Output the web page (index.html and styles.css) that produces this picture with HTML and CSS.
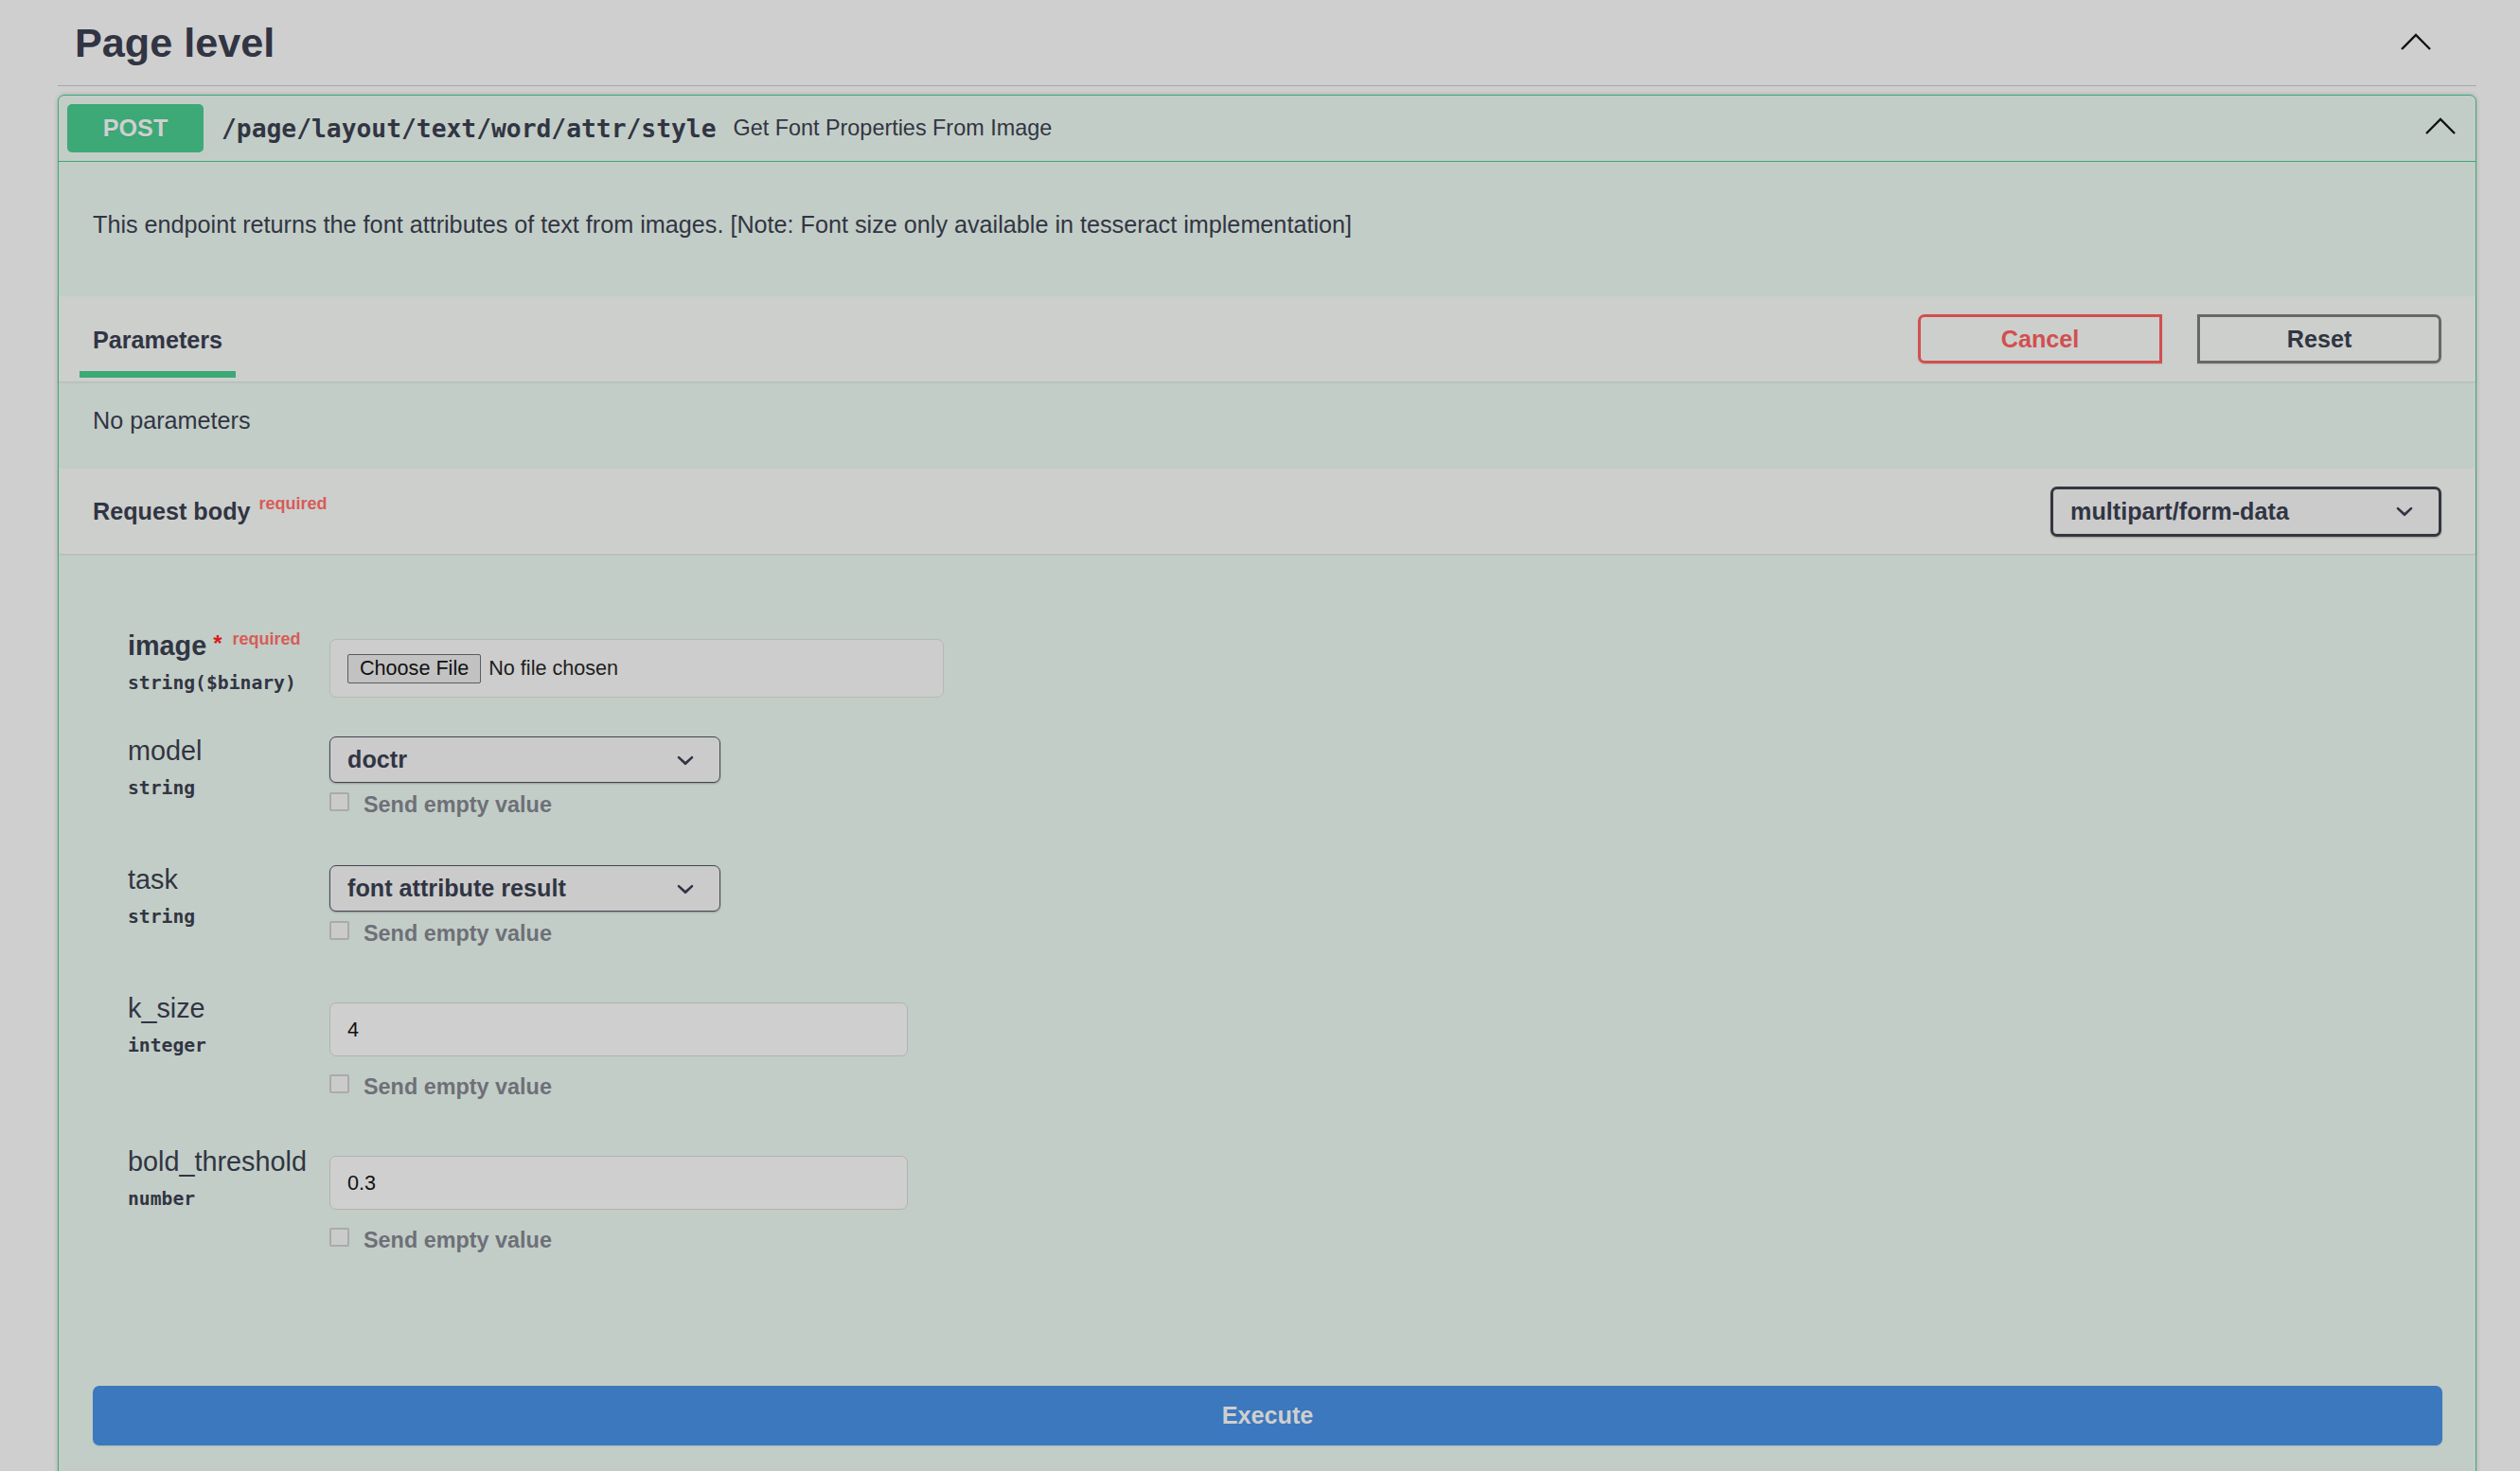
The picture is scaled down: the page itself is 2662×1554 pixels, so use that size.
FILE: index.html
```html
<!DOCTYPE html>
<html lang="en">
<head>
<meta charset="utf-8">
<title>Page level</title>
<link rel="stylesheet" href="styles.css">
</head>
<body>
<div class="page">
  <div class="tag-header">
    <h3 class="tag-title">Page level</h3>
    <svg class="arrow-up tag-arrow" width="32" height="18" viewBox="0 0 32 18"><polyline points="1,17 16,2 31,17"/></svg>
  </div>

  <div class="opblock">
    <div class="summary">
      <span class="method">POST</span>
      <span class="path">/page/layout/text/word/attr/style</span>
      <span class="summary-desc">Get Font Properties From Image</span>
      <svg class="arrow-up summary-arrow" width="32" height="18" viewBox="0 0 32 18"><polyline points="1,17 16,2 31,17"/></svg>
    </div>

    <div class="op-desc">
      <p>This endpoint returns the font attributes of text from images. [Note: Font size only available in tesseract implementation]</p>
    </div>

    <div class="section-header params-header">
      <div class="tab">
        <span class="tab-label">Parameters</span>
        <span class="tab-bar"></span>
      </div>
      <div class="btn-group">
        <button class="btn cancel">Cancel</button>
        <button class="btn reset">Reset</button>
      </div>
    </div>

    <div class="no-params">No parameters</div>

    <div class="section-header body-header">
      <h4 class="body-title">Request body<span class="req-note">required</span></h4>
      <div class="select select-wide">
        <span>multipart/form-data</span>
        <svg class="chev" width="36" height="36" viewBox="0 0 20 20"><path d="M13.418 7.859a.695.695 0 01.978 0 .68.68 0 010 .969l-3.908 3.83a.697.697 0 01-.979 0l-3.908-3.83a.68.68 0 010-.969.695.695 0 01.978 0L10 11l3.418-3.141z"/></svg>
      </div>
    </div>

    <div class="form-area">
      <div class="param-list">
        <div class="param-row">
          <div class="param-meta">
            <div class="param-name is-required">image<span class="star">*</span><span class="req-note">required</span></div>
            <div class="param-type">string($binary)</div>
          </div>
          <div class="param-control">
            <div class="file-input">
              <span class="file-btn">Choose File</span>
              <span class="file-text">No file chosen</span>
            </div>
          </div>
        </div>

        <div class="param-row">
          <div class="param-meta">
            <div class="param-name">model</div>
            <div class="param-type">string</div>
          </div>
          <div class="param-control">
            <div class="select select-param">
              <span>doctr</span>
              <svg class="chev" width="36" height="36" viewBox="0 0 20 20"><path d="M13.418 7.859a.695.695 0 01.978 0 .68.68 0 010 .969l-3.908 3.83a.697.697 0 01-.979 0l-3.908-3.83a.68.68 0 010-.969.695.695 0 01.978 0L10 11l3.418-3.141z"/></svg>
            </div>
            <div class="empty-toggle"><span class="checkbox"></span>Send empty value</div>
          </div>
        </div>

        <div class="param-row">
          <div class="param-meta">
            <div class="param-name">task</div>
            <div class="param-type">string</div>
          </div>
          <div class="param-control">
            <div class="select select-param">
              <span>font attribute result</span>
              <svg class="chev" width="36" height="36" viewBox="0 0 20 20"><path d="M13.418 7.859a.695.695 0 01.978 0 .68.68 0 010 .969l-3.908 3.83a.697.697 0 01-.979 0l-3.908-3.83a.68.68 0 010-.969.695.695 0 01.978 0L10 11l3.418-3.141z"/></svg>
            </div>
            <div class="empty-toggle"><span class="checkbox"></span>Send empty value</div>
          </div>
        </div>

        <div class="param-row">
          <div class="param-meta">
            <div class="param-name">k_size</div>
            <div class="param-type">integer</div>
          </div>
          <div class="param-control">
            <input class="text-input" type="text" value="4">
            <div class="empty-toggle"><span class="checkbox"></span>Send empty value</div>
          </div>
        </div>

        <div class="param-row">
          <div class="param-meta">
            <div class="param-name">bold_threshold</div>
            <div class="param-type">number</div>
          </div>
          <div class="param-control">
            <input class="text-input" type="text" value="0.3">
            <div class="empty-toggle"><span class="checkbox"></span>Send empty value</div>
          </div>
        </div>
      </div>

      <div class="execute-wrapper">
        <button class="execute">Execute</button>
      </div>
    </div>
  </div>
</div>
</body>
</html>
```

FILE: styles.css
```css
html, body {
  margin: 0;
  background: #cfcfcf;
}

body {
  font-family: "Liberation Sans", Arial, sans-serif;
  color: #313543;
}

.page {
  margin-left: 61px;
  width: 2555px;
  padding-bottom: 200px;
}

/* ---------- tag header ---------- */
.tag-header {
  display: flex;
  align-items: flex-start;
  padding: 20px 48px 20px 18px;
  border-bottom: 1px solid #a7a7aa;
  margin-bottom: 9px;
}

.tag-title {
  flex: 1;
  margin: 0;
  font-size: 43.2px;
  line-height: 50px;
  font-weight: bold;
  color: #313543;
}

.arrow-up {
  flex: none;
  fill: none;
  stroke: #111;
  stroke-width: 2.3;
  stroke-linejoin: miter;
}

.tag-arrow {
  margin-top: 15px;
}

/* ---------- operation block ---------- */
.opblock {
  border: 1px solid #3ca977;
  border-radius: 7px;
  background: #c3cdc7;
  box-shadow: 0 0 5px rgba(0, 0, 0, 0.19);
}

.summary {
  display: flex;
  align-items: center;
  padding: 9px 21px 9px 9px;
  border-bottom: 1px solid #3ca977;
}

.method {
  flex: none;
  width: 144px;
  height: 51px;
  display: flex;
  align-items: center;
  justify-content: center;
  background: #3ca977;
  border-radius: 5px;
  color: #cfcfcf;
  font-size: 25.2px;
  font-weight: bold;
  text-shadow: 0 1px 0 rgba(0, 0, 0, 0.1);
}

.path {
  margin-left: 19px;
  font-family: "DejaVu Sans Mono", "Liberation Mono", monospace;
  font-weight: bold;
  font-size: 26.3px;
  color: #313543;
  white-space: nowrap;
}

.summary-desc {
  flex: 1;
  margin-left: 18px;
  font-size: 23.4px;
  color: #313543;
}

.summary-arrow {
  margin-bottom: 5px;
}

.op-desc {
  padding: 48px 36px 58px;
}

.op-desc p {
  margin: 0;
  font-size: 25.2px;
  line-height: 36px;
}

/* ---------- section headers ---------- */
.section-header {
  display: flex;
  background: #cdcfcd;
  box-shadow: 0 1px 2px rgba(0, 0, 0, 0.1);
}

.params-header {
  align-items: flex-start;
  justify-content: space-between;
  padding: 19px 36px 4px 22px;
}

.tab {
  display: flex;
  flex-direction: column;
  align-items: center;
  padding-top: 9px;
}

.tab-label {
  font-size: 25.2px;
  line-height: 36px;
  font-weight: bold;
}

.tab-bar {
  width: 165px;
  height: 7px;
  margin-top: 15px;
  background: #3ca977;
}

.btn-group {
  display: flex;
  gap: 37px;
}

.btn {
  box-sizing: border-box;
  width: 258px;
  height: 52px;
  padding: 0;
  background: transparent;
  border: 3px solid #686868;
  font-family: "Liberation Sans", Arial, sans-serif;
  font-size: 25.2px;
  font-weight: bold;
  box-shadow: 0 1px 2px rgba(0, 0, 0, 0.1);
}

.btn.cancel {
  border-color: #d24f4f;
  color: #d24f4f;
  border-radius: 7px 0 0 7px;
}

.btn.reset {
  color: #313543;
  border-radius: 0 7px 7px 0;
}

.no-params {
  padding: 23px 36px 33px;
  font-size: 25.2px;
  line-height: 36px;
}

.body-header {
  box-sizing: border-box;
  height: 90px;
  padding: 0 36px;
  align-items: center;
  justify-content: space-between;
}

.body-title {
  margin: 0;
  font-size: 25.2px;
  line-height: 36px;
  font-weight: bold;
}

.req-note {
  font-size: 18px;
  font-weight: bold;
  color: #d65c58;
  vertical-align: 11px;
  line-height: 0;
  margin-left: 9px;
}

/* ---------- selects ---------- */
.select {
  box-sizing: border-box;
  display: flex;
  align-items: center;
  background: #cbcbcb;
  border-radius: 7px;
  box-shadow: 0 1px 2px rgba(0, 0, 0, 0.25);
  font-size: 25.2px;
  font-weight: bold;
  color: #313543;
  padding-left: 18px;
}

.select-wide {
  width: 413px;
  height: 53px;
  border: 3px solid #35373f;
}

.select-param {
  width: 413px;
  height: 49px;
  border: 1px solid #44474f;
  margin-top: 2px;
}

.chev {
  flex: none;
  margin-left: auto;
  margin-right: 18px;
  fill: #313543;
}

/* ---------- form ---------- */
.form-area {
  padding: 80px 35px 36px 36px;
}

.param-list {
  display: flex;
  flex-direction: column;
  gap: 27px;
  margin-left: 37px;
}

.param-row {
  display: flex;
  align-items: flex-start;
}

.param-meta {
  flex: none;
  width: 213px;
}

.param-name {
  font-size: 28.8px;
  line-height: 34px;
  white-space: nowrap;
}

.param-name.is-required {
  font-weight: bold;
}

.star {
  font-size: 24px;
  font-weight: bold;
  color: #d41c1c;
  vertical-align: 4px;
  line-height: 0;
  margin-left: 7px;
}

.param-name .req-note {
  margin-left: 11px;
}

.param-type {
  padding-top: 10px;
  font-family: "DejaVu Sans Mono", "Liberation Mono", monospace;
  font-weight: bold;
  font-size: 19.7px;
  line-height: 26px;
}

.param-control {
  display: flex;
  flex-direction: column;
  align-items: flex-start;
}

.file-input {
  box-sizing: border-box;
  width: 649px;
  height: 62px;
  margin: 10px 0 12px;
  padding-left: 18px;
  display: flex;
  align-items: center;
  border: 1px solid #b5b9b6;
  border-radius: 7px;
  background: #cdcdcd;
  font-size: 21.6px;
  color: #1e1e1e;
}

.file-btn {
  box-sizing: border-box;
  height: 31px;
  padding: 0 12px;
  display: flex;
  align-items: center;
  background: #c2c2c2;
  border: 1px solid #5c5c5c;
  border-radius: 2px;
  color: #111;
}

.file-text {
  margin-left: 8px;
}

.text-input {
  box-sizing: border-box;
  width: 611px;
  height: 57px;
  margin: 11px 0 9px;
  padding: 0 18px;
  border: 1px solid #b0b3b1;
  border-radius: 7px;
  background: #cfcfcf;
  font-family: "Liberation Sans", Arial, sans-serif;
  font-size: 21.6px;
  color: #111;
  outline: none;
}

.empty-toggle {
  display: flex;
  align-items: flex-start;
  padding: 10px 0 21px;
  font-size: 23.4px;
  line-height: 27px;
  font-weight: bold;
  color: #6d7078;
}

.checkbox {
  flex: none;
  box-sizing: border-box;
  width: 21px;
  height: 20px;
  margin: 0 15px 0 0;
  border: 2px solid #a9abab;
  border-radius: 2px;
  background: #cbcbcb;
}

/* ---------- execute ---------- */
.execute-wrapper {
  margin-top: 119px;
}

.execute {
  display: block;
  width: 100%;
  height: 63px;
  border: 0;
  border-radius: 7px;
  background: #3c78be;
  color: #cfcfcf;
  font-family: "Liberation Sans", Arial, sans-serif;
  font-size: 25.2px;
  font-weight: bold;
  box-shadow: 0 1px 2px rgba(0, 0, 0, 0.1);
}
```
